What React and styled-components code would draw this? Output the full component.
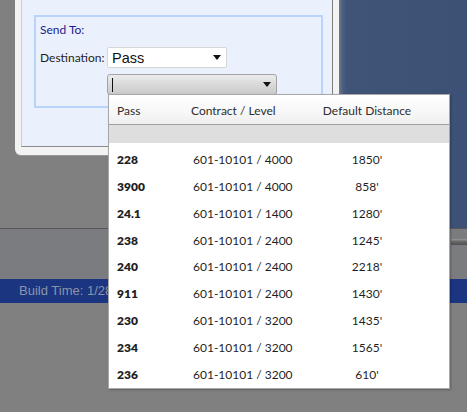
import React from "react";
import styled, { createGlobalStyle } from "styled-components";

const Global = createGlobalStyle`
  html, body { margin: 0; padding: 0; }
  body {
    background: #808080;
    overflow: hidden;
    font-family: Lato, "Liberation Sans", sans-serif;
  }
`;

const Screen = styled.div`
  position: relative;
  width: 467px;
  height: 412px;
  overflow: hidden;
  background: #808080;
  display: flex;
  flex-direction: column;
`;

const TopArea = styled.div`
  display: flex;
  height: 228px;
  border-bottom: 1px solid #55575a;
`;

const Gutter = styled.div`
  width: 15px;
  background: #808080;
`;

const DialogColumn = styled.div`
  width: 324px;
  display: flex;
  flex-direction: column;
  background: #808080;
`;

const DialogFrame = styled.div`
  height: 148px;
  background: #f3f3f3;
  padding: 0 6px 7px 6px;
  border-bottom-left-radius: 6px;
  border-bottom-right-radius: 2px;
  box-shadow: 0 1px 0 #9a9a9a;
`;

const DialogBody = styled.div`
  height: 147px;
  box-sizing: border-box;
  background: #eaf1fd;
  border-left: 1px solid #c9ccd2;
  border-right: 1px solid #7d7d7d;
  border-bottom: 1px solid #8a8a8a;
  padding: 15px 9px 0 12px;
`;

const GroupBox = styled.div`
  height: 93px;
  box-sizing: border-box;
  border: 2px solid #b8d4fb;
  padding: 4px 0 0 4px;
  display: flex;
  flex-direction: column;
`;

const GroupTitle = styled.div`
  font-size: 12px;
  color: #1c1a8f;
  height: 18px;
  line-height: 18px;
`;

const FieldRow = styled.div`
  display: flex;
  align-items: center;
  margin-top: 8px;
`;

const Label = styled.div`
  font-size: 12px;
  color: #1e1e1e;
  width: 67px;
`;

const SelectBox = styled.div`
  width: 120px;
  height: 21px;
  box-sizing: border-box;
  background: #ffffff;
  border: 1px solid #d6d6d6;
  border-radius: 2px;
  display: flex;
  align-items: center;
  justify-content: space-between;
  padding: 0 5px 0 4px;
  font-family: "Liberation Sans", Arial, sans-serif;
  font-size: 14.5px;
  color: #111;
`;

const ComboRow = styled.div`
  display: flex;
  margin-top: 6px;
  padding-left: 67px;
`;

const Combo = styled.div`
  width: 170px;
  height: 21px;
  box-sizing: border-box;
  border: 1px solid #a3a3a3;
  border-radius: 3px;
  background: linear-gradient(#ececec, #d9d9d9 50%, #cbcbcb);
  display: flex;
  align-items: center;
  justify-content: space-between;
  padding: 0 5px 0 4px;
`;

const Caret = styled.div`
  width: 1px;
  height: 14px;
  background: #111;
`;

const Arrow = () => (
  <svg width="8" height="5" viewBox="0 0 8 5">
    <path d="M0 0 H8 L4 5 Z" fill="#111" />
  </svg>
);

const RightPanel = styled.div`
  flex: 1;
  background: linear-gradient(to right, #6e7b8e 0px, #4a5d7d 4px, #3f5477 8px, #3c5175 100%);
`;

const LowerArea = styled.div`
  height: 50px;
  background: #7a7c7f;
  display: flex;
  justify-content: flex-end;
  padding-top: 10px;
  box-sizing: border-box;
`;

const Thumb = styled.div`
  width: 16px;
  height: 6px;
  background: linear-gradient(#9a9a9a, #6a6a6a 40%, #4f4f4f);
`;

const StatusBar = styled.div`
  height: 24px;
  background: #1b3580;
  color: #8b94aa;
  font-family: "Liberation Sans", Arial, sans-serif;
  font-size: 13px;
  line-height: 24px;
  padding-left: 19px;
  white-space: nowrap;
`;

const Popup = styled.div`
  position: absolute;
  left: 108px;
  top: 94px;
  width: 342px;
  height: 295px;
  box-sizing: border-box;
  background: #ffffff;
  border: 1px solid #a8a8a8;
  box-shadow: 1px 1px 2px rgba(0, 0, 0, 0.25);
  display: flex;
  flex-direction: column;
`;

const Grid = styled.div`
  display: grid;
  grid-template-columns: 74px 94px 1fr;
  padding-left: 8px;
  align-items: center;
`;

const HeaderRow = styled(Grid)`
  height: 30px;
  box-sizing: border-box;
  background: linear-gradient(#ffffff, #f7f7f7 60%, #efefef);
  border-bottom: 1px solid #a0a0a0;
  padding-top: 3px;
  font-size: 12px;
  color: #2e2e2e;
`;

const BlankRow = styled.div`
  height: 18px;
  background: #dedede;
  margin: 0 0 3px 0;
`;

const DataRow = styled(Grid)`
  height: 27px;
  font-size: 12px;
  color: #1f1f1f;
`;

const Cell = styled.div`
  font-weight: ${(p) => (p.$bold ? 800 : 400)};
  text-align: ${(p) => (p.$center ? "center" : "left")};
  padding-left: ${(p) => p.$pad || 0}px;
  white-space: nowrap;
`;

const rows = [
  ["228", "601-10101 / 4000", "1850'"],
  ["3900", "601-10101 / 4000", "858'"],
  ["24.1", "601-10101 / 1400", "1280'"],
  ["238", "601-10101 / 2400", "1245'"],
  ["240", "601-10101 / 2400", "2218'"],
  ["911", "601-10101 / 2400", "1430'"],
  ["230", "601-10101 / 3200", "1435'"],
  ["234", "601-10101 / 3200", "1565'"],
  ["236", "601-10101 / 3200", "610'"],
];

export default function App() {
  return (
    <Screen>
      <Global />
      <TopArea>
        <Gutter />
        <DialogColumn>
          <DialogFrame>
            <DialogBody>
              <GroupBox>
                <GroupTitle>Send To:</GroupTitle>
                <FieldRow>
                  <Label>Destination:</Label>
                  <SelectBox>
                    <span>Pass</span>
                    <Arrow />
                  </SelectBox>
                </FieldRow>
                <ComboRow>
                  <Combo>
                    <Caret />
                    <Arrow />
                  </Combo>
                </ComboRow>
              </GroupBox>
            </DialogBody>
          </DialogFrame>
        </DialogColumn>
        <RightPanel />
      </TopArea>
      <LowerArea>
        <Thumb />
      </LowerArea>
      <StatusBar>Build Time: 1/28</StatusBar>
      <Popup>
        <HeaderRow>
          <Cell>Pass</Cell>
          <Cell>Contract / Level</Cell>
          <Cell $center>Default Distance</Cell>
        </HeaderRow>
        <BlankRow />
        {rows.map((r) => (
          <DataRow key={r[0]}>
            <Cell $bold>{r[0]}</Cell>
            <Cell $pad={2}>{r[1]}</Cell>
            <Cell $center>{r[2]}</Cell>
          </DataRow>
        ))}
      </Popup>
    </Screen>
  );
}
